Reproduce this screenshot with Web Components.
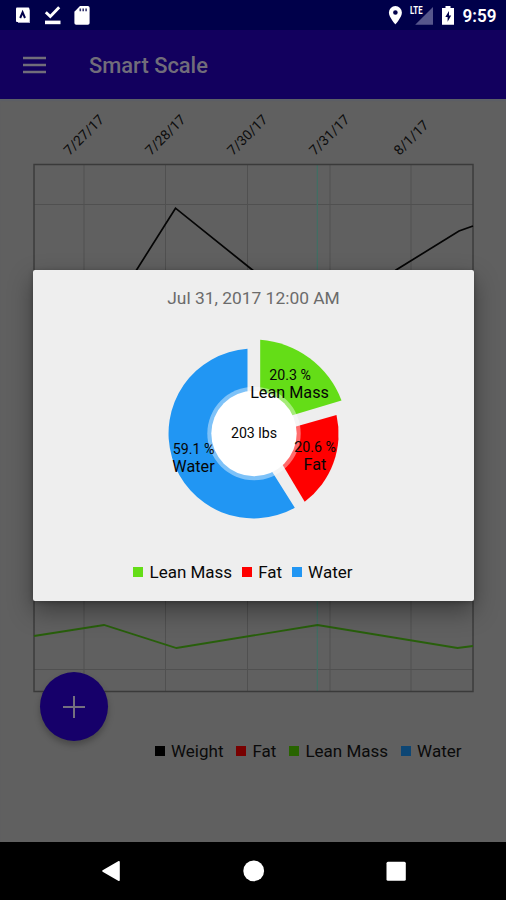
<!DOCTYPE html>
<html lang="en">
<head>
<meta charset="utf-8">
<title>Smart Scale</title>
<style>
html,body{margin:0;height:100%;overflow:hidden;background:#000}
body{font-family:Roboto,"Liberation Sans",sans-serif}
</style>
</head>
<body>
<scale-app></scale-app>
<script>
const define=(name,html)=>customElements.define(name,class extends HTMLElement{
  constructor(){super();this.attachShadow({mode:'open'}).innerHTML=html;}
});

define('status-bar',`
<style>
:host{display:flex;height:30px;background:#00004a;color:#fff}
svg{display:block}
text{font-family:Roboto,"Liberation Sans",sans-serif}
</style>
<svg width="506" height="30" viewBox="0 0 506 30">
  <rect x="18" y="9.500" width="12" height="13.500" fill="#a9a9c4"/>
  <rect x="16" y="7.500" width="13.300" height="14.500" rx="1" fill="#fff"/>
  <path d="M20.200 18L22.600 12.400L25 18" stroke="#00004a" stroke-width="2" fill="none"/>
  <path d="M45.800 12.300L50.300 16.500L59.200 7.200" stroke="#fff" stroke-width="2.900" fill="none"/>
  <rect x="45" y="20.600" width="15.500" height="3.600" fill="#fff"/>
  <path d="M80 6H87.800Q89.600 6 89.600 7.800V23Q89.600 24.800 87.800 24.800H76.200Q74.400 24.800 74.400 23V11.800Z" fill="#fff"/>
  <path d="M80.300 8.500V11.200M83.200 8.500V11.200M86.100 8.500V11.200" stroke="#33336e" stroke-width="1.600"/>
  <path fill-rule="evenodd" d="M395.400 6A6.500 6.500 0 0 0 388.900 12.500C388.900 17.300 395.400 24.400 395.400 24.400S401.900 17.300 401.900 12.500A6.500 6.500 0 0 0 395.400 6ZM395.400 10.200A2.300 2.300 0 1 1 395.400 14.800A2.300 2.300 0 0 1 395.400 10.200Z" fill="#fff"/>
  <path d="M433 7V24.800H415.200Z" fill="#56568c"/>
  <rect x="409" y="5" width="14.500" height="11" fill="#00004a"/>
  <text x="410" y="14.300" font-size="10.500" font-weight="700" textLength="12.500" lengthAdjust="spacingAndGlyphs" fill="#fff">LTE</text>
  <path d="M445.500 6H450.500V8H454V24.800H442V8H445.500Z" fill="#fff"/>
  <path d="M449 11L445.300 17H447.600V21.800L451.200 15.600H449Z" fill="#00004a"/>
  <text x="462.500" y="22.300" font-size="18" font-weight="600" textLength="34" lengthAdjust="spacingAndGlyphs" fill="#fff">9:59</text>
</svg>`);

define('app-bar',`
<style>
:host{display:flex;align-items:center;height:69px;box-sizing:border-box;padding:0 23px;gap:43px;background:#12005e;color:#716d7a}
h1{margin:2px 0 0;font-size:21.900px;font-weight:500;line-height:26px;white-space:nowrap}
</style>
<svg width="23" height="18" viewBox="0 0 23 18"><path d="M0 2H23M0 9H23M0 16H23" stroke="#716d7a" stroke-width="2.400"/></svg>
<h1><slot></slot></h1>`);

define('legend-item',`
<style>
:host{display:flex;align-items:center;gap:6px;font-size:17px;line-height:20px;white-space:nowrap}
i{width:10px;height:10px;background:var(--swatch)}
</style><i></i><span><slot></slot></span>`);

const dates=[['7/27/17',69.500,156],['7/28/17',151,156],['7/30/17',233,156],['7/31/17',315,156],['8/1/17',399.500,156]]
  .map(([t,x,y])=>`<text transform="translate(${x} ${y-99}) rotate(-45)" font-size="13.800">${t}</text>`).join('');

define('trend-chart',`
<style>:host{display:block;height:620px}svg{display:block}text{font-family:Roboto,"Liberation Sans",sans-serif;fill:#0c0c0c}</style>
<svg width="506" height="620" viewBox="0 0 506 620">
  ${dates}
  <path d="M84 65V592M165.500 65V592M247.500 65V592M330 65V592M411 65V592M34 105.500H473M34 570.500H473" stroke="#505050" fill="none"/>
  <path d="M317.300 65V592" stroke="#3f6f64" stroke-width="1.200"/>
  <path d="M34 65.500H473V592.500H34Z" stroke="#3a3a3a" stroke-width="1.400" fill="none"/>
  <path d="M105 221L175.500 109.200L252.500 171L329 232L396 171L459 132L473 127" stroke="#050505" stroke-width="1.700" fill="none"/>
  <path d="M34 537L104 526L176.500 549L317.500 526L457.500 549L473 547" stroke="#285f0b" stroke-width="1.800" fill="none"/>
</svg>`);

define('add-button',`
<style>
:host{display:flex;align-items:center;justify-content:center;width:68px;height:69px;border-radius:50%;background:#16006a;box-shadow:0 4px 6px rgba(0,0,0,.25)}
</style>
<svg width="24" height="24" viewBox="0 0 24 24"><path d="M12 1V23M1 12H23" stroke="#74707f" stroke-width="2"/></svg>`);

define('nav-bar',`
<style>:host{display:block;height:58px;background:#000}svg{display:block}</style>
<svg width="506" height="58" viewBox="0 0 506 58">
  <path d="M119 19.800V38.200L103 29Z" fill="#fff" stroke="#fff" stroke-width="1.600" stroke-linejoin="round"/>
  <circle cx="253.700" cy="28.900" r="10.400" fill="#fff"/>
  <rect x="386.500" y="19.800" width="19.300" height="19" rx="1.500" fill="#fff"/>
</svg>`);

define('composition-pie',`
<style>:host{display:block}svg{display:block}text{font-family:Roboto,"Liberation Sans",sans-serif;fill:#060606;text-anchor:middle}</style>
<svg width="200" height="200" viewBox="153.500 333 200 200">
  <path d="M247 348.700A85 85 0 1 0 294.300 507.800L268 466L247 392Z" fill="#2196f3"/>
  <path d="M259.700 339.800A93.900 93.900 0 0 1 341 400.500L291 415.500L259.700 392Z" fill="#64dd17"/>
  <path d="M336 415A85 85 0 0 1 304.200 501.700L281 463L292 427.500Z" fill="#f00"/>
  <circle cx="253.500" cy="433.500" r="46.700" fill="#fff" opacity=".42"/>
  <circle cx="253.500" cy="433.500" r="42.700" fill="#fff"/>
  <text x="289.500" y="380" font-size="14.200">20.3 %</text>
  <text x="289" y="397.600" font-size="16.200">Lean Mass</text>
  <text x="314.500" y="452.400" font-size="14.200">20.6 %</text>
  <text x="314.500" y="470" font-size="16.200">Fat</text>
  <text x="193" y="454" font-size="14.200">59.1 %</text>
  <text x="193" y="471.700" font-size="16.200">Water</text>
  <text x="253.500" y="438.300" font-size="14.200">203 lbs</text>
</svg>`);

define('detail-dialog',`
<style>
:host{display:flex;flex-direction:column;align-items:center;box-sizing:border-box;width:441px;height:331px;padding-top:18px;background:#eee;border-radius:2px;box-shadow:0 10px 24px rgba(0,0,0,.38),0 1px 5px rgba(0,0,0,.25)}
h2{margin:0;font-size:17.400px;line-height:21px;font-weight:400;color:#6b6b6b;white-space:nowrap}
composition-pie{margin-top:24px}
.legend{display:flex;gap:10px;margin-top:29px;margin-right:21px;color:#080808}
</style>
<h2><slot></slot></h2>
<composition-pie></composition-pie>
<div class="legend">
  <legend-item style="--swatch:#64dd17">Lean Mass</legend-item>
  <legend-item style="--swatch:#f00">Fat</legend-item>
  <legend-item style="--swatch:#2196f3">Water</legend-item>
</div>`);

define('scale-app',`
<style>
:host{display:flex;flex-direction:column;position:relative;width:506px;height:900px;overflow:hidden;background:#606060}
main{flex:1;min-height:0;background:#606060;box-shadow:inset 0 2px 1px #5b5f66}
.legend{display:flex;justify-content:flex-end;gap:13px;padding:22px 44.500px 0 0;color:#0a0a0a}
add-button{position:absolute;left:40px;top:672px}
detail-dialog{position:absolute;left:33px;top:270px}
</style>
<status-bar></status-bar>
<app-bar>Smart Scale</app-bar>
<main>
  <trend-chart></trend-chart>
  <div class="legend">
    <legend-item style="--swatch:#000">Weight</legend-item>
    <legend-item style="--swatch:#780000">Fat</legend-item>
    <legend-item style="--swatch:#286400">Lean Mass</legend-item>
    <legend-item style="--swatch:#0d4674">Water</legend-item>
  </div>
</main>
<nav-bar></nav-bar>
<add-button></add-button>
<detail-dialog>Jul 31, 2017 12:00 AM</detail-dialog>`);
</script>
</body>
</html>
